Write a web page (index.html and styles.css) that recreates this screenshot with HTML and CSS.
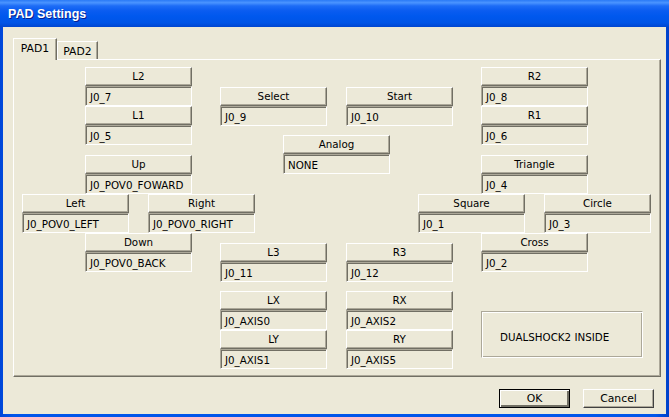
FILE: index.html
```html
<!DOCTYPE html>
<html>
<head>
<meta charset="utf-8">
<title>PAD Settings</title>
<link rel="stylesheet" href="styles.css">
</head>
<body>
<div class="window">
  <div class="titlebar">PAD Settings</div>
  <div class="client">
    <div class="tabs">
      <div class="tab tab-active">PAD1</div>
      <div class="tab">PAD2</div>
    </div>
    <div class="panel">
      <div class="node n-l2"><div class="btn">L2</div><div class="field">J0_7</div></div>
      <div class="node n-l1"><div class="btn">L1</div><div class="field">J0_5</div></div>
      <div class="node n-up"><div class="btn">Up</div><div class="field">J0_POV0_FOWARD</div></div>
      <div class="node n-left"><div class="btn">Left</div><div class="field">J0_POV0_LEFT</div></div>
      <div class="node n-right"><div class="btn">Right</div><div class="field">J0_POV0_RIGHT</div></div>
      <div class="node n-down"><div class="btn">Down</div><div class="field">J0_POV0_BACK</div></div>
      <div class="node n-select"><div class="btn">Select</div><div class="field">J0_9</div></div>
      <div class="node n-start"><div class="btn">Start</div><div class="field">J0_10</div></div>
      <div class="node n-analog"><div class="btn">Analog</div><div class="field">NONE</div></div>
      <div class="node n-r2"><div class="btn">R2</div><div class="field">J0_8</div></div>
      <div class="node n-r1"><div class="btn">R1</div><div class="field">J0_6</div></div>
      <div class="node n-tri"><div class="btn">Triangle</div><div class="field">J0_4</div></div>
      <div class="node n-square"><div class="btn">Square</div><div class="field">J0_1</div></div>
      <div class="node n-circle"><div class="btn">Circle</div><div class="field">J0_3</div></div>
      <div class="node n-cross"><div class="btn">Cross</div><div class="field">J0_2</div></div>
      <div class="node n-l3"><div class="btn">L3</div><div class="field">J0_11</div></div>
      <div class="node n-r3"><div class="btn">R3</div><div class="field">J0_12</div></div>
      <div class="node n-lx"><div class="btn">LX</div><div class="field">J0_AXIS0</div></div>
      <div class="node n-ly"><div class="btn">LY</div><div class="field">J0_AXIS1</div></div>
      <div class="node n-rx"><div class="btn">RX</div><div class="field">J0_AXIS2</div></div>
      <div class="node n-ry"><div class="btn">RY</div><div class="field">J0_AXIS5</div></div>
      <div class="info">DUALSHOCK2 INSIDE</div>
    </div>
    <div class="footer">
      <div class="dlgbtn dlgbtn-default">OK</div>
      <div class="dlgbtn">Cancel</div>
    </div>
  </div>
</div>
</body>
</html>
```
FILE: styles.css
```css
html, body {
  margin: 0;
  padding: 0;
}
body {
  width: 669px;
  height: 417px;
  overflow: hidden;
  font-family: "DejaVu Sans", "Liberation Sans", sans-serif;
  font-size: 10.3px;
  color: #000;
  background: #0055e5;
}
.window {
  width: 669px;
  height: 417px;
  display: flex;
  flex-direction: column;
  background: linear-gradient(to right, #0046d8, #0055ea 2%, #0055ea 98%, #0040c8);
}
.titlebar {
  height: 27px;
  flex: none;
  display: flex;
  align-items: center;
  padding-left: 8px;
  padding-top: 1px;
  box-sizing: border-box;
  color: #fff;
  font-family: "Liberation Sans", "DejaVu Sans", sans-serif;
  font-weight: bold;
  font-size: 12.5px;
  text-shadow: 1px 1px 0 #0a1e8c;
  background: linear-gradient(to bottom, #2a7af6 0%, #4a94ff 10%, #1d6cf6 22%, #0a5cf0 40%, #0058ee 60%, #0054e6 85%, #0046d0 100%);
}
.client {
  flex: 1;
  margin: 0 3px 3px 3px;
  background: #ece9d8;
  padding: 11px 5px 0 10px;
  display: flex;
  flex-direction: column;
}
.tabs {
  display: flex;
  align-items: flex-end;
  height: 21px;
  position: relative;
  z-index: 2;
}
.tab {
  box-sizing: border-box;
  height: 18px;
  width: 41px;
  border: 1px solid;
  border-bottom: none;
  border-color: #fff #716f64 transparent #fff;
  box-shadow: inset -1px 0 #aca899;
  background: #ece9d8;
  display: flex;
  align-items: center;
  justify-content: center;
  padding-top: 1px;
  font-size: 10.8px;
}
.tab-active {
  height: 22px;
  width: 44px;
  margin-bottom: -1px;
  padding-top: 0;
  padding-bottom: 2px;
}
.panel {
  position: relative;
  height: 318px;
  box-sizing: border-box;
  border: 1px solid;
  border-color: #fff #716f64 #716f64 #fff;
  box-shadow: inset -1px -1px #aca899;
  z-index: 1;
}
.node {
  position: absolute;
  width: 107px;
}
.btn {
  box-sizing: border-box;
  height: 19px;
  border: 1px solid;
  border-color: #fff #716f64 #716f64 #fff;
  box-shadow: inset -1px -1px #aca899;
  display: flex;
  align-items: center;
  justify-content: center;
  padding-bottom: 1px;
}
.field {
  box-sizing: border-box;
  height: 20px;
  border: 1px solid;
  border-color: #aca899 #fff #fff #aca899;
  box-shadow: inset 1px 1px #716f64;
  display: flex;
  align-items: center;
  padding-left: 4px;
  padding-top: 1px;
  white-space: nowrap;
}
.n-l2 { left: 71px; top: 7px; }
.n-l1 { left: 71px; top: 46px; }
.n-up { left: 71px; top: 95px; }
.n-left { left: 8px; top: 134px; }
.n-right { left: 134px; top: 134px; }
.n-down { left: 71px; top: 173px; }
.n-select { left: 206px; top: 27px; }
.n-start { left: 332px; top: 27px; }
.n-analog { left: 269px; top: 75px; }
.n-r2 { left: 467px; top: 7px; }
.n-r1 { left: 467px; top: 46px; }
.n-tri { left: 467px; top: 95px; }
.n-square { left: 404px; top: 134px; }
.n-circle { left: 530px; top: 134px; }
.n-cross { left: 467px; top: 173px; }
.n-l3 { left: 206px; top: 183px; }
.n-r3 { left: 332px; top: 183px; }
.n-lx { left: 206px; top: 231px; }
.n-ly { left: 206px; top: 270px; }
.n-rx { left: 332px; top: 231px; }
.n-ry { left: 332px; top: 270px; }
.info {
  position: absolute;
  left: 467px;
  top: 251px;
  width: 162px;
  height: 47px;
  box-sizing: border-box;
  border: 1px solid;
  border-color: #aca899 #fff #fff #aca899;
  box-shadow: inset 1px 1px #fff, inset -1px -1px #aca899;
  display: flex;
  align-items: center;
  padding-left: 18px;
  padding-top: 5px;
}
.footer {
  display: flex;
  justify-content: flex-end;
  gap: 13px;
  padding-top: 12px;
  padding-right: 7px;
}
.dlgbtn {
  box-sizing: border-box;
  width: 71px;
  height: 19px;
  border: 1px solid;
  border-color: #fff #404040 #404040 #fff;
  box-shadow: inset -1px -1px #aca899;
  display: flex;
  align-items: center;
  justify-content: center;
  font-size: 10.8px;
}
.dlgbtn-default {
  border-color: #000;
  box-shadow: inset 1px 1px #fff, inset -2px -2px #716f64;
}
```
